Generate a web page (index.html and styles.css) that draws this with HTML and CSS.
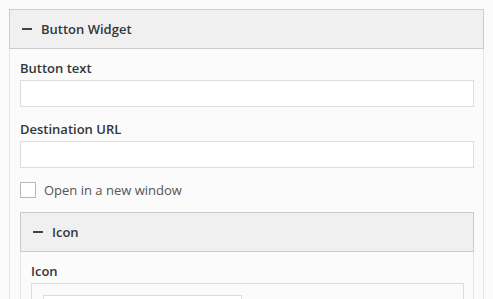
FILE: index.html
```html
<!DOCTYPE html>
<html lang="en">
<head>
<meta charset="utf-8">
<title>Button Widget</title>
<link rel="stylesheet" href="styles.css">
</head>
<body>
<div class="panel">
  <div class="panel-head"><span class="minus"></span><span class="panel-title">Button Widget</span></div>
  <div class="panel-body">
    <div class="field">
      <label class="label">Button text</label>
      <div class="input"></div>
    </div>
    <div class="field">
      <label class="label">Destination URL</label>
      <div class="input"></div>
    </div>
    <div class="check-row">
      <span class="checkbox"></span>
      <span class="check-label">Open in a new window</span>
    </div>
    <div class="panel inner">
      <div class="panel-head"><span class="minus"></span><span class="panel-title">Icon</span></div>
      <div class="panel-body">
        <label class="label">Icon</label>
        <div class="icon-box">
          <div class="icon-select"></div>
        </div>
      </div>
    </div>
  </div>
</div>
</body>
</html>
```
FILE: styles.css
```css
html {
  overflow: hidden;
}
body {
  margin: 9px;
  background: #fbfbfb;
  font-family: "Open Sans", "Liberation Sans", sans-serif;
  font-size: 13px;
  color: #32373c;
}
.panel {
  border-left: 1px solid #e5e5e5;
  border-right: 1px solid #e5e5e5;
  background: #fbfbfb;
}
.panel-head {
  height: 38px;
  border: 1px solid #ccc;
  margin: 0 -1px;
  background: #f0f0f0;
  display: flex;
  align-items: center;
  padding-left: 12px;
}
.minus {
  width: 10px;
  height: 2px;
  background: #444;
  margin-right: 9px;
}
.panel-title {
  font-weight: 600;
  line-height: 38px;
}
.panel-body {
  padding: 9px 9px 10px 10px;
}
.label {
  display: block;
  font-weight: 600;
  line-height: 20px;
  margin-bottom: 2px;
}
.field {
  margin-bottom: 12px;
}
.input {
  height: 25px;
  border: 1px solid #ddd;
  background: #fff;
}
.check-row {
  display: flex;
  align-items: center;
  margin: 14px 0;
}
.checkbox {
  width: 14px;
  height: 14px;
  border: 1px solid #b4b9be;
  background: #fff;
  margin-right: 8px;
}
.check-label {
  line-height: 16px;
  color: #555;
}
.inner {
  border-color: #e5e5e5;
}
.icon-box {
  border: 1px solid #ddd;
  padding: 11px;
  height: 60px;
}
.icon-select {
  width: 197px;
  height: 30px;
  border: 1px solid #ddd;
  background: #fff;
}
```
